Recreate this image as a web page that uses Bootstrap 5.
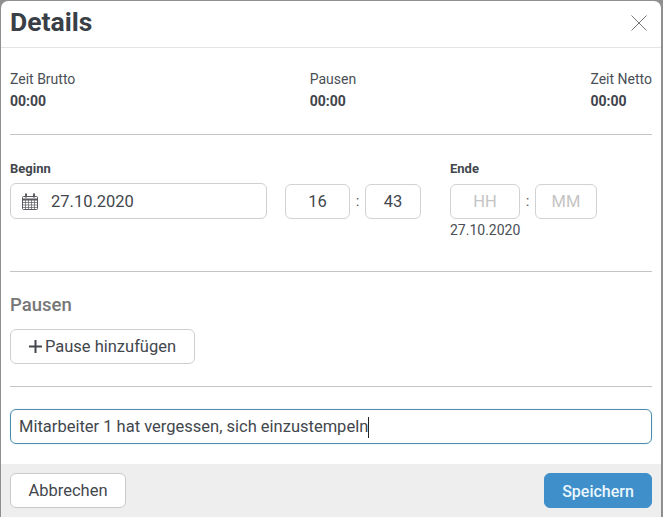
<!DOCTYPE html>
<html lang="de">
<head>
<meta charset="utf-8">
<title>Details</title>
<link href="https://cdn.jsdelivr.net/npm/bootstrap@5.3.0/dist/css/bootstrap.min.css" rel="stylesheet">
<style>
html,body{height:100%;margin:0;}
body{background:#8f8f8f;font-family:Roboto,"Liberation Sans",sans-serif;color:#3f444b;overflow:hidden;}
.dlg{width:660px;height:517px;margin:1px 0 0 1px;background:#fff;border-radius:7px 7px 0 0;display:flex;flex-direction:column;overflow:hidden;}
.dlg-head{height:47px;border-bottom:1px solid #e4e4e4;padding:0 14px 3px 9px;flex:none;}
.dlg-title{font-size:26.500px;font-weight:700;color:#3a3f47;margin:0;line-height:1;}
.dlg-close{width:16px;height:16px;padding:0;border:0;background:none;display:block;line-height:0;}
.dlg-body{padding:0 9px;flex:1 1 auto;}
.stat-row{padding-top:24px;height:86px;font-size:14px;line-height:15px;}
.stat-label{color:#4a4f55;margin-bottom:7px;}
.stat-val{font-weight:700;color:#3f444b;}
.rule{height:1px;background:#c4c4c4;flex:none;}
.time-row{height:136px;padding-top:27px;}
.fld-label{font-size:13px;line-height:14px;font-weight:700;color:#42474d;margin-bottom:8px;}
.date-box{width:257px;height:36px;margin-top:-1px;border:1px solid #cfcfcf;border-radius:6px;padding:2px 0 0 11px;gap:13px;font-size:16.500px;color:#42474d;}
.date-box svg{margin-top:-2px;}
.cell{height:35px;border:1px solid #d2d2d2;border-radius:6px;padding-top:2px;font-size:16.500px;color:#42474d;}
.cell-h{width:65px;}
.cell-m{width:56px;}
.cell-e1{width:70px;color:#c4c4c4;}
.cell-e2{width:62px;color:#c4c4c4;}
.colon{font-size:15px;color:#555;text-align:center;width:15px;}
.col-start{width:275px;flex:none;}
.gap-mid{width:29px;flex:none;}
.end-date{font-size:14px;line-height:15px;margin-top:4px;color:#4a4f55;}
.pause-sec{height:114px;padding-top:23px;}
.pause-title{font-size:18.500px;line-height:21px;font-weight:500;color:#767676;margin:0 0 13px;}
.btn-pause{width:185px;height:35px;padding:2px 0 0;border:1px solid #cfcfcf;border-radius:6px;background:#fff;font-size:16.500px;color:#42474d;gap:3px;}
.btn-pause svg{margin-top:-2px;}
.note-wrap{padding-top:22px;}
.note{height:35px;border:1px solid #4c8dab;border-radius:6px;padding:2px 8px 0;font-size:16.500px;color:#42474d;box-shadow:0 0 2px rgba(90,170,210,.25);}
.caret{display:inline-block;width:1px;height:21px;background:#222;flex:none;}
.dlg-foot{height:54px;background:#eee;padding:9px 9px 0;flex:none;}
.btn-cancel,.btn-save{height:35px;padding:2px 0 0;border-radius:6px;font-size:16.500px;}
.btn-cancel{width:116px;background:#fff;border:1px solid #c9c9c9;color:#42474d;}
.btn-save{width:108px;background:#3f8fca;border:1px solid #3f8fca;color:#e9f6fc;font-size:16px;font-weight:500;}
</style>
</head>
<body>
<div class="dlg">
  <div class="dlg-head d-flex align-items-center justify-content-between">
    <h1 class="dlg-title">Details</h1>
    <button class="dlg-close" type="button" aria-label="Schließen">
      <svg width="16" height="16" viewBox="0 0 16 16"><path d="M.5.5l15 15M15.500.5l-15 15" stroke="#777" stroke-width="1" fill="none"/></svg>
    </button>
  </div>
  <div class="dlg-body">
    <div class="stat-row d-flex justify-content-between">
      <div><div class="stat-label">Zeit Brutto</div><div class="stat-val">00:00</div></div>
      <div><div class="stat-label">Pausen</div><div class="stat-val">00:00</div></div>
      <div><div class="stat-label">Zeit Netto</div><div class="stat-val">00:00</div></div>
    </div>
    <div class="rule"></div>
    <div class="time-row d-flex">
      <div class="col-start">
        <div class="fld-label">Beginn</div>
        <div class="date-box d-flex align-items-center">
          <svg width="16" height="17" viewBox="0 0 16 17" fill="none" stroke="#5a5a60" stroke-width="1"><rect x=".5" y="3.500" width="15" height="13" rx="1"/><path d="M.5 6.500h15" stroke-width="2"/><path d="M.5 9.500h15M.5 12h15M.5 14.500h15M3.500 7v9M6.500 7v9M9.500 7v9M12.500 7v9" stroke-width=".7"/><path d="M4 .5v4M12 .5v4" stroke-width="2"/></svg>
          <span>27.10.2020</span>
        </div>
      </div>
      <div class="d-flex flex-column">
        <div class="fld-label invisible">Zeit</div>
        <div class="d-flex align-items-center">
          <div class="cell cell-h d-flex align-items-center justify-content-center">16</div>
          <div class="colon">:</div>
          <div class="cell cell-m d-flex align-items-center justify-content-center">43</div>
        </div>
      </div>
      <div class="gap-mid"></div>
      <div>
        <div class="fld-label">Ende</div>
        <div class="d-flex align-items-center">
          <div class="cell cell-e1 d-flex align-items-center justify-content-center">HH</div>
          <div class="colon">:</div>
          <div class="cell cell-e2 d-flex align-items-center justify-content-center">MM</div>
        </div>
        <div class="end-date">27.10.2020</div>
      </div>
    </div>
    <div class="rule"></div>
    <div class="pause-sec">
      <h2 class="pause-title">Pausen</h2>
      <button class="btn-pause d-flex align-items-center justify-content-center" type="button">
        <svg width="13" height="13" viewBox="0 0 13 13"><path d="M6.500 0v13M0 6.500h13" stroke="#42474d" stroke-width="2"/></svg>
        <span>Pause hinzufügen</span>
      </button>
    </div>
    <div class="rule"></div>
    <div class="note-wrap">
      <div class="note d-flex align-items-center"><span>Mitarbeiter 1 hat vergessen, sich einzustempeln</span><span class="caret"></span></div>
    </div>
  </div>
  <div class="dlg-foot d-flex justify-content-between">
    <button class="btn-cancel" type="button">Abbrechen</button>
    <button class="btn-save" type="button">Speichern</button>
  </div>
</div>
<script src="https://cdn.jsdelivr.net/npm/bootstrap@5.3.0/dist/js/bootstrap.bundle.min.js"></script>
</body>
</html>
